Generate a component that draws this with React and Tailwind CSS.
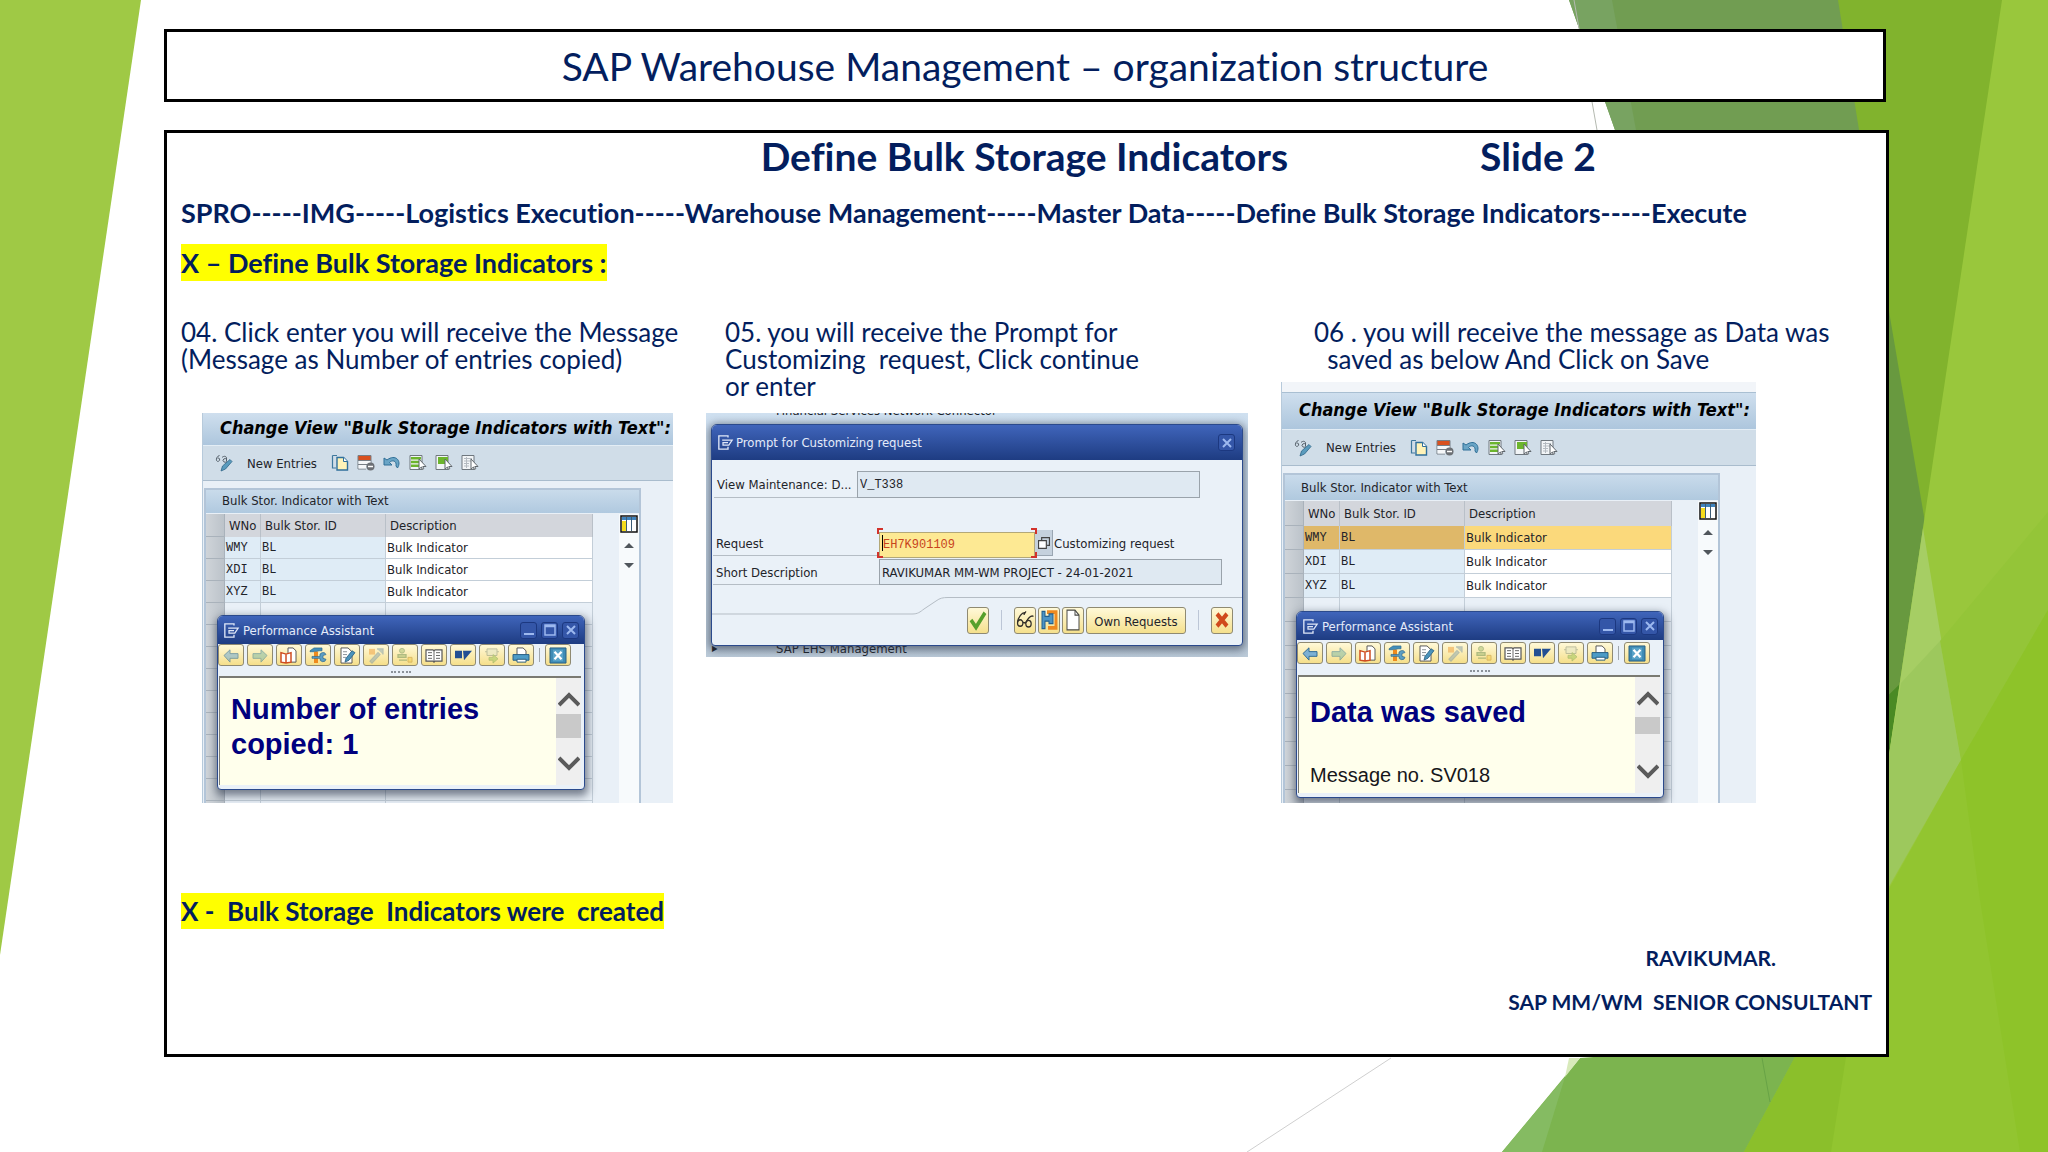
import React from "react";

const ROWS = [
    { wno: "WMY", id: "BL", text: "Bulk Indicator" },
    { wno: "XDI", id: "BL", text: "Bulk Indicator" },
    { wno: "XYZ", id: "BL", text: "Bulk Indicator" },
];

const BLANK_ROWS = [0, 1, 2, 3, 4, 5, 6, 7, 8, 9];

// Green facets behind the slide
function Backdrop() {
    return (
        <svg className="absolute inset-0 h-full w-full" viewBox="0 0 2048 1152" preserveAspectRatio="none" aria-hidden="true">
            <polygon points="0,0 141,0 0,955" fill="#9fc945" />
            <polygon points="1569,0 2048,0 2048,700 1870,900 1870,380 1700,380 1615,130" fill="#719d52" />
            <polygon points="1569,0 1612,0 1636,130 1615,130" fill="#78a361" />
            <polygon points="1838,0 2048,0 2048,700 1961,760" fill="#81b32d" />
            <polygon points="1870,200 1870,720 1905,680 1926,528" fill="#68993f" />
            <polygon points="1870,713 1904,680 1889,770 1870,900" fill="#4a8a24" />
            <polygon points="2002,0 2048,0 2048,1152 1832,1152 1889,755" fill="#99c73c" />
            <polygon points="1923,528 1961,760 1870,900 1870,860 1889,755" fill="#a6ce64" />
            <polygon points="1901,683 1940,641 1961,760 1870,920 1870,860 1889,755" fill="#9dc85d" />
            <polygon points="1940,641 2048,512 2048,700 1961,760" fill="#94c538" />
            <polygon points="1580,1058 1502,1152 1760,1152 1820,1040" fill="#7cb44f" />
            <polygon points="1569,1058 1580,1058 1565,1077" fill="#d8eabb" />
            <polygon points="1565,1077 1502,1152 1542,1152" fill="#85bb62" />
            <polygon points="1744,1152 1795,1057 1961,760 2048,610 2048,1152" fill="#92c530" />
            <polygon points="1744,1152 1795,1057 1846,1057 1831,1152" fill="#8bbf2b" />
            <polygon points="1961,760 2048,610 2048,1152 2020,1152 1980,900" fill="#8ec329" />
            <line x1="1574" y1="0" x2="1597" y2="130" stroke="#b4b9b0" strokeWidth="1" />
            <line x1="1762" y1="1058" x2="1770" y2="1102" stroke="#68a346" strokeWidth="1" />
            <line x1="1247" y1="1152" x2="1391" y2="1058" stroke="#cfcfcf" strokeWidth="1" />
        </svg>
    );
}

function Icon({ children, className = "size-[18px]" }) {
    return (
        <svg className={className} viewBox="0 0 18 18" fill="none" aria-hidden="true">
            {children}
        </svg>
    );
}

function SapWindowIcon() {
    return (
        <Icon className="h-[15px] w-[17px] shrink-0">
            <path d="M12 3V1H1v16h11v-3" stroke="#dfe7f8" strokeWidth="1.6" />
            <path d="M5 6h12l-4 6H6V9h6" stroke="#dfe7f8" strokeWidth="1.5" />
        </Icon>
    );
}

function DisplayChangeIcon() {
    return (
        <Icon>
            <path d="M4.500 1.500C2 2 1 5 1.500 6.500a1.700 1.700 0 1 0 1-2.500M7 3.500c2-2 5-1.500 4.500 1.500v2.500M11.500 5.500a1.800 1.800 0 1 0 0 1.800" stroke="#55606a" strokeWidth="1" />
            <path d="M7.500 12 15 5.500l2 2-6.500 7.500-4.500 2z" fill="#5a9bbd" stroke="#2f6688" strokeWidth=".8" />
        </Icon>
    );
}

function CopyIcon() {
    return (
        <Icon>
            <path d="M1.500 1.500H6M1.500 1.500V14H5" stroke="#3f789d" strokeWidth="1.200" />
            <path d="M6 3.500h6.500l4 4V16H6z" fill="#fff3b8" stroke="#2f6f9b" strokeWidth="1.400" />
            <path d="M12.500 3.500v4h4" fill="#fff" stroke="#2f6f9b" />
        </Icon>
    );
}

function DeleteRowIcon() {
    return (
        <Icon>
            <path d="M1 2h13v4H1z" fill="#d9501e" />
            <path d="M1 1.500h13V9M1 1.500V15h8M1 6.500h13M1 10.500h9" stroke="#777e85" />
            <path d="M1.500 7h12v3h-12zM1.500 11H9v3.500H1.500z" fill="#f5f7f9" />
            <circle cx="13.500" cy="12.500" r="4" fill="#6c7075" />
            <path d="M11 12.500h5" stroke="#fff" strokeWidth="1.500" />
        </Icon>
    );
}

function UndoIcon() {
    return (
        <Icon>
            <path d="M1 4v7h8L6.500 8.500C9 5.500 14 6.500 13 12l1.500 2C19 7 12.500-.5 4 6z" fill="#6aa5c6" stroke="#2f6f97" strokeWidth="1" />
        </Icon>
    );
}

function SelectIcon({ mode }) {
    return (
        <Icon>
            <path d="M1 1.500h12v14H1z" fill="#f2f5f7" stroke="#6f777e" />
            {mode === "all" && <path d="M2 3h10v2.500H2zM2 6.700h10v2.500H2zM2 10.400h10v2.500H2z" fill="#6cb52d" />}
            {mode === "block" && <path d="M3 3h10v7H3z" fill="#6cb52d" />}
            {mode === "none" && <path d="M3 4.500h8M3 7h8M3 9.500h5M3 12h5M5.500 3v11" stroke="#b5bbc1" />}
            <path d="M10 5v10l2.500-2 1 2.500 1.300-.8-1-2.200H17z" fill="#fff" stroke="#60676d" strokeWidth="1" />
        </Icon>
    );
}

function ConfigIcon() {
    return (
        <Icon>
            <path d="M1 1h16v16H1z" fill="#fff" stroke="#101010" strokeWidth="1.500" />
            <path d="M2 2h14v3H2z" fill="#3f83bd" />
            <path d="M2 6h4v10H2z" fill="#f6dc1c" />
            <path d="M6.500 2v14M11.500 2v14" stroke="#3b5c77" />
        </Icon>
    );
}

const ASSISTANT_ICONS = {
    back: <path d="M2 9l6-6v4h8v5H8v4z" fill="#7cb0d3" stroke="#2d6a95" />,
    forward: <path d="M16 9l-6-6v4H2v5h8v4z" fill="#8fc0a6" stroke="#4d8796" />,
    doc: (
        <>
            <path d="M8 1h5l3 3v12H8z" fill="#fff" stroke="#555" />
            <path d="M1 6l5 1.500L11 6v10l-5 1-5-1zM6 7.500V17" fill="#fff" stroke="#cf4d22" strokeWidth="1.500" />
        </>
    ),
    tools: (
        <>
            <path d="M1 4l4-3h8v3h-3l-3 1H1z" fill="#438fb9" stroke="#2b678d" strokeWidth=".7" />
            <path d="M5 5h4v12H5z" fill="#ef8b1d" />
            <path d="M3 10h8a3 3 0 0 1 6-2l-3 1v3l3 1a3 3 0 0 1-6-1H3z" fill="#5d9fc4" stroke="#2b678d" strokeWidth=".7" />
        </>
    ),
    edit: (
        <>
            <path d="M3 1h7l4 4v12H3z" fill="#fff" stroke="#555" />
            <path d="M5 5h4M5 8h4M5 11h3" stroke="#8b9298" />
            <path d="M8 12 14 4l3 2-6 8-4 2z" fill="#4b93bb" stroke="#255d80" strokeWidth=".8" />
        </>
    ),
    wand: (
        <>
            <path d="M2 2h6v6H2z" fill="#f0a94e" />
            <path d="M3 15 11 6l2 2-8 9zM10 2h6v6" fill="#9db2b1" stroke="#8aa0a6" strokeWidth="1.200" />
        </>
    ),
    person: (
        <>
            <circle cx="6" cy="4" r="2.500" fill="#b5c780" stroke="#7f9b61" />
            <path d="M2 8h8v3H2zM3 14h8" fill="#b5c780" stroke="#7f9b61" strokeWidth="1.300" />
            <path d="M12 11h4v5h-4z" fill="#f4d15a" stroke="#c79b3c" />
        </>
    ),
    book: (
        <>
            <path d="M1 3h7l1 1 1-1h7v12h-7l-1 1-1-1H1z" fill="#fff" stroke="#555" strokeWidth="1.200" />
            <path d="M9 4v12M3 6h4M3 9h4M3 12h4M11 6h4M11 9h4M11 12h4" stroke="#666" />
        </>
    ),
    flag: <path d="M1 4h7v8H1zM9 4h9L10 14z" fill="#234f93" />,
    send: (
        <>
            <path d="M4 2h10v7H4zM2 5h2M14 5h2" fill="#e4e6c4" stroke="#959d85" />
            <path d="M6 11h4V8l5 4.500-5 4.500v-3H6z" fill="#a9cb62" stroke="#84a554" strokeWidth=".8" />
        </>
    ),
    print: (
        <>
            <path d="M5 8V1h6l3 3v4" fill="#fff" stroke="#555" />
            <path d="M1 8h16v6H1z" fill="#4d9bc6" stroke="#285f83" />
            <path d="M5 13h9v3H5z" fill="#fff" stroke="#285f83" />
        </>
    ),
    close: (
        <>
            <path d="M1 1h16v16H1z" fill="#3f8cb6" stroke="#285f83" />
            <path d="M4 3h10v12H4z" fill="#5aa3c8" />
            <path d="M5.500 5l7 8M12.500 5l-7 8" stroke="#fff" strokeWidth="2.200" />
        </>
    ),
};

const ASSISTANT_TOOLS = ["back", "forward", "doc", "tools", "edit", "wand", "person", "book", "flag", "send", "print"];

function AssistantButton({ name, dim }) {
    return (
        <button
            type="button"
            aria-label={name}
            className="flex h-[22px] w-[26px] shrink-0 items-center justify-center rounded-[3px] border border-[#8f8a72] bg-linear-to-b from-[#fff9d8] to-[#f5df8a]"
        >
            <svg className={dim ? "h-[17px] w-[18px] opacity-60" : "h-[17px] w-[18px]"} viewBox="0 0 18 18" fill="none" preserveAspectRatio="none" aria-hidden="true">
                {ASSISTANT_ICONS[name]}
            </svg>
        </button>
    );
}

function CaptionButton({ label, children }) {
    return (
        <button type="button" aria-label={label} className="flex size-[17px] items-center justify-center rounded-[3px] border border-[#1c3880] bg-[#3456a8]">
            <svg className="size-3" viewBox="0 0 12 12" fill="none" stroke="#9db9ef" aria-hidden="true">
                {children}
            </svg>
        </button>
    );
}

function PerformanceAssistant({ late, children }) {
    const dimmed = late ? ["forward", "wand", "person", "send"] : ["back", "forward", "wand", "person", "send"];

    return (
        <section
            className={`absolute left-[14px] flex w-[368px] flex-col overflow-hidden rounded-t-md rounded-b-sm border border-[#2b4a8c] bg-[#eaf1f8] shadow-[1px_4px_8px_2px_rgba(40,50,70,0.6)] ${
                late ? "top-[229px] h-[187px]" : "top-[202px] h-[175px]"
            }`}
        >
            <header className="flex h-[28px] shrink-0 items-center gap-[3px] bg-linear-to-b from-[#4065bb] to-[#1e3c82] px-[5px] text-white">
                <SapWindowIcon />
                <h3 className="flex-1 text-[13px] text-[#e4ebfa]">Performance Assistant</h3>
                <div className="flex gap-1">
                    <CaptionButton label="Minimize">
                        <path d="M1 10h10" strokeWidth="2" />
                    </CaptionButton>
                    <CaptionButton label="Maximize">
                        <path d="M1 1h10v10H1zM1 2.500h10" strokeWidth="1.500" />
                    </CaptionButton>
                    <CaptionButton label="Close">
                        <path d="M2 2l8 8M10 2l-8 8" strokeWidth="2" />
                    </CaptionButton>
                </div>
            </header>
            <div className={`flex shrink-0 flex-col justify-between ${late ? "h-[35px]" : "h-8"}`}>
                <div className={late ? "flex gap-[3px] pt-[2px]" : "flex gap-[3px]"}>
                    {ASSISTANT_TOOLS.map((name) => (
                        <AssistantButton key={name} name={name} dim={dimmed.includes(name)} />
                    ))}
                    <span className="mx-[2px] my-1 w-px bg-[#a0a6ac]" />
                    <AssistantButton name="close" />
                </div>
                <span className="mb-[3px] w-5 self-center border-t-2 border-dotted border-[#8b929a]" />
            </div>
            <div className="mr-[3px] mb-1 ml-px flex min-h-0 flex-1 border-t-2 border-l border-[#7a7a72] bg-[#ffffec]">
                <div className="flex-1 pl-[11px] font-['Liberation_Sans',sans-serif]">{children}</div>
                <div className="flex w-[25px] flex-col items-center justify-between bg-[#efefef] py-3">
                    <svg className="h-[18px] w-[22px]" viewBox="0 0 22 18" fill="none" stroke="#5b5b5b" strokeWidth="4" aria-hidden="true">
                        <path d="M1 15 11 5l10 10" />
                    </svg>
                    <span className={late ? "mb-5 h-[17px] w-full bg-[#c9c9c9]" : "mb-3 h-6 w-full bg-[#c9c9c9]"} />
                    <svg className="h-[18px] w-[22px]" viewBox="0 0 22 18" fill="none" stroke="#5b5b5b" strokeWidth="4" aria-hidden="true">
                        <path d="M1 3l10 10L21 3" />
                    </svg>
                </div>
            </div>
        </section>
    );
}

function BulkTable({ late }) {
    const rowHeight = late ? "h-6" : "h-[22px]";
    const selector = "border-r border-b border-[#a9b2bb] bg-linear-to-r from-[#cfd4d9] to-[#bcc3ca]";

    return (
        <table className="w-[387px] shrink-0 table-fixed border-separate border-spacing-0 text-left text-[13px] leading-none">
            <colgroup>
                <col className="w-[19px]" />
                <col className="w-[36px]" />
                <col className="w-[125px]" />
                <col className="w-[207px]" />
            </colgroup>
            <thead>
                <tr className={late ? "h-[25px] bg-[#d3d6dc]" : "h-[23px] bg-[#d3d6dc]"}>
                    <th className={selector} />
                    <th className="border-r border-[#b9c0c8] pl-1 font-normal">WNo</th>
                    <th className="border-r border-[#b9c0c8] pl-1 font-normal">Bulk Stor. ID</th>
                    <th className="border-r border-[#b9c0c8] pl-1 font-normal">Description</th>
                </tr>
            </thead>
            <tbody>
                {ROWS.map((row, i) => {
                    const active = late && i === 0;
                    const keyCell = active ? "bg-[#dfb869]" : "bg-[#dfecf6]";
                    return (
                        <tr key={row.wno} className={rowHeight}>
                            <td className={selector} />
                            <td className={`border-r border-b border-[#c3ced8] pl-px font-['Liberation_Mono',monospace] text-xs ${keyCell}`}>{row.wno}</td>
                            <td className={`border-r border-b border-[#c3ced8] pl-px font-['Liberation_Mono',monospace] text-xs ${keyCell}`}>{row.id}</td>
                            <td className={`border-r border-b border-[#c3ced8] pl-px ${active ? "bg-[#fbd97b]" : "bg-white"}`}>{row.text}</td>
                        </tr>
                    );
                })}
                {BLANK_ROWS.map((n) => (
                    <tr key={n} className={rowHeight}>
                        <td className={selector} />
                        <td className="border-r border-b border-[#c3ced8]" />
                        <td className="border-r border-b border-[#c3ced8]" />
                        <td className="border-r border-b border-[#c3ced8]" />
                    </tr>
                ))}
            </tbody>
        </table>
    );
}

function ChangeView({ late, children }) {
    return (
        <div
            className={`relative flex flex-col overflow-hidden border-l border-[#b7cadb] bg-[#e9f0f7] font-['DejaVu_Sans_Condensed','DejaVu_Sans',sans-serif] text-[#1e2329] ${
                late ? "h-[421px] w-[475px]" : "h-[390px] w-[471px]"
            }`}
        >
            {late && <div className="h-[11px] shrink-0 border-b border-[#a9bfd2] bg-[#f2f5f9]" />}
            <h3
                className={`shrink-0 bg-linear-to-b from-[#cfdfee] to-[#adc6dd] pl-[17px] text-[18px] font-bold whitespace-nowrap text-black italic ${
                    late ? "h-9 leading-[34px]" : "h-8 leading-[30px]"
                }`}
            >
                Change View "Bulk Storage Indicators with Text":
            </h3>
            <div className={`flex shrink-0 items-center gap-2 border-y border-t-[#e3edf5] border-b-[#a9bccd] bg-[#d0dde8] pl-3 ${late ? "h-[37px]" : "h-9"}`}>
                <DisplayChangeIcon />
                <button type="button" className="mr-[6px] ml-[6px] text-[13px] whitespace-nowrap">
                    New Entries
                </button>
                <CopyIcon />
                <DeleteRowIcon />
                <UndoIcon />
                <SelectIcon mode="all" />
                <SelectIcon mode="block" />
                <SelectIcon mode="none" />
            </div>
            <div className="mt-[7px] ml-px flex w-[437px] flex-1 flex-col border-2 border-b-0 border-[#b3c5d8]">
                <h4 className={`mb-px shrink-0 bg-linear-to-b from-[#c9dbeb] to-[#b0c9df] pl-4 text-[13px] ${late ? "h-[25px] leading-[25px]" : "h-[23px] leading-[22px]"}`}>
                    Bulk Stor. Indicator with Text
                </h4>
                <div className="flex min-h-0 flex-1 justify-between">
                    <BulkTable late={late} />
                    <div className="flex w-5 flex-col items-center bg-[#f7fafc] pt-px">
                        <ConfigIcon />
                        <svg className="mt-2 h-[30px] w-[10px]" viewBox="0 0 10 30" fill="#50565c" aria-hidden="true">
                            <path d="M0 7l5-5 5 5zM0 22l5 5 5-5z" />
                        </svg>
                    </div>
                </div>
            </div>
            <PerformanceAssistant late={late}>{children}</PerformanceAssistant>
        </div>
    );
}

function PromptButton({ label, children }) {
    return (
        <button
            type="button"
            aria-label={label}
            className="flex h-[27px] w-[22px] items-center justify-center rounded-[3px] border border-[#8f8a72] bg-linear-to-b from-[#fff9d8] to-[#f5e08c]"
        >
            <svg className="h-[22px] w-[18px]" viewBox="0 0 18 18" fill="none" preserveAspectRatio="none" aria-hidden="true">
                {children}
            </svg>
        </button>
    );
}

function RequestPrompt() {
    return (
        <div className="relative flex h-[244px] w-[542px] flex-col justify-between overflow-hidden bg-linear-to-b from-[#cfe0f0] to-[#bccbd9] font-['DejaVu_Sans_Condensed','DejaVu_Sans',sans-serif] text-[13px] text-[#1e2329]">
            <p className="-mt-[10px] pl-[70px] leading-4">Financial Services Network Connector</p>
            <p className="flex pl-[6px] leading-4">
                <span className="w-16 text-[8px]">▶</span>
                SAP EHS Management
            </p>
            <form
                className="absolute top-[11px] left-[5px] flex h-[222px] w-[532px] flex-col overflow-hidden rounded-t-md rounded-b-sm border border-[#2b4a8c] bg-[#eaf1f8] shadow-[0_2px_8px_2px_rgba(40,50,70,0.6)]"
                onSubmit={(e) => e.preventDefault()}
            >
                <header className="flex h-[35px] shrink-0 items-center gap-[2px] bg-linear-to-b from-[#4065bb] to-[#1e3c82] pr-[7px] pl-[5px]">
                    <SapWindowIcon />
                    <h3 className="flex-1 text-[#e4ebfa]">Prompt for Customizing request</h3>
                    <CaptionButton label="Close">
                        <path d="M2 2l8 8M10 2l-8 8" strokeWidth="2" />
                    </CaptionButton>
                </header>
                <div className="mt-[11px] flex h-[27px] pl-[2px]">
                    <label htmlFor="view" className="w-[143px] border-b border-[#b5bdc5] pl-[3px] leading-[27px] whitespace-nowrap">
                        View Maintenance: D...
                    </label>
                    <input id="view" readOnly defaultValue="V_T338" className="w-[343px] border border-[#9aa3ab] bg-[#dfe9f2] pl-[2px] font-['Liberation_Mono',monospace] text-xs" />
                </div>
                <div className="mt-8 flex h-[26px] pl-px">
                    <label htmlFor="request" className="w-[166px] border-b border-[#b5bdc5] pl-[3px] leading-[27px]">
                        Request
                    </label>
                    <div className="relative w-[156px]">
                        <input
                            id="request"
                            defaultValue="EH7K901109"
                            className="h-full w-full border border-[#b3a878] bg-[#fde993] pl-[3px] font-['Liberation_Mono',monospace] text-xs text-[#c8441c]"
                        />
                        <span className="absolute top-[5px] left-[3px] h-4 w-px bg-black" />
                        <span className="absolute -top-[2px] -left-[2px] size-[6px] border-t-2 border-l-2 border-[#d2322b]" />
                        <span className="absolute -top-[2px] -right-[2px] size-[6px] border-t-2 border-r-2 border-[#d2322b]" />
                        <span className="absolute -bottom-[2px] -left-[2px] size-[6px] border-b-2 border-l-2 border-[#d2322b]" />
                        <span className="absolute -right-[2px] -bottom-[2px] size-[6px] border-r-2 border-b-2 border-[#d2322b]" />
                    </div>
                    <button type="button" aria-label="Value help" className="flex w-[18px] items-center justify-center border-r border-b border-[#9aa6b2] bg-[#c5d1dd]">
                        <Icon className="h-[18px] w-[14px]">
                            <path d="M6 5V2h10v10h-3" stroke="#444" strokeWidth="1.500" />
                            <path d="M2 6h10v10H2z" fill="#fff" stroke="#444" strokeWidth="1.500" />
                        </Icon>
                    </button>
                    <span className="pl-px leading-[27px] whitespace-nowrap">Customizing request</span>
                </div>
                <div className="mt-[3px] flex h-[26px] pl-px">
                    <label htmlFor="short" className="w-[166px] border-b border-[#b5bdc5] pl-[3px] leading-[27px]">
                        Short Description
                    </label>
                    <input id="short" readOnly defaultValue="RAVIKUMAR MM-WM PROJECT - 24-01-2021" className="w-[343px] border border-[#9aa3ab] bg-[#dfe9f2] pl-[2px]" />
                </div>
                <div className="relative flex flex-1 items-center justify-end gap-[2px] pt-[10px] pr-[9px]">
                    <svg className="absolute top-3 left-0 h-[18px] w-full" viewBox="0 0 530 18" fill="none" stroke="#b5bdc5" aria-hidden="true">
                        <path d="M0 17h200c6 0 8-2 12-5l12-8c4-3 7-3.500 12-3.500h294" />
                    </svg>
                    <PromptButton label="Continue">
                        <path d="M2 9l5 6L16 3" stroke="#56a02c" strokeWidth="3.500" />
                    </PromptButton>
                    <span className="mx-[10px] h-5 w-px bg-[#bcc6d6]" />
                    <PromptButton label="Display">
                        <path d="M9 3C6 2.500 2 7 1.500 11M10 2c-1 1.500-2 2-2 3M17.500 6c-3-1-6 2-7.500 5M7 11l3 .5" stroke="#33302a" strokeWidth="1.200" />
                        <circle cx="4.200" cy="11.500" r="2.700" stroke="#33302a" strokeWidth="1.200" />
                        <circle cx="12.500" cy="12" r="2.700" stroke="#33302a" strokeWidth="1.200" />
                    </PromptButton>
                    <PromptButton label="Where used">
                        <path d="M7 2.500h9v13H8" stroke="#ee8a21" strokeWidth="3" />
                        <path d="M2 2h3v4h4v-2h4v8H9v-2H5v6H2z" fill="#4c93c4" stroke="#235f8c" />
                    </PromptButton>
                    <PromptButton label="Create">
                        <path d="M3 1h8l4 4v12H3z" fill="#fff" stroke="#4a4a46" />
                        <path d="M11 1v4h4" stroke="#4a4a46" />
                    </PromptButton>
                    <button type="button" className="h-[27px] w-[100px] rounded-[3px] border border-[#8f8a72] bg-linear-to-b from-[#fff9d8] to-[#f5e08c]">
                        Own Requests
                    </button>
                    <span className="mx-[10px] h-5 w-px bg-[#bcc6d6]" />
                    <PromptButton label="Cancel">
                        <path d="M4 4l10 10M14 4 4 14" stroke="#d04a1c" strokeWidth="4" />
                    </PromptButton>
                </div>
            </form>
        </div>
    );
}

export default function App() {
    return (
        <div className="relative min-h-screen overflow-hidden bg-white font-['Lato',sans-serif] text-[#031e5e] [font-variant-ligatures:none]">
            <Backdrop />
            <main className="relative flex min-h-screen flex-col pt-[29px] pr-[159px] pb-[95px] pl-[164px]">
                <h1 className="mr-[3px] flex h-[73px] items-center justify-center border-[3px] border-black bg-white pt-px text-[39px] leading-none">
                    SAP Warehouse Management – organization structure
                </h1>

                <article className="mt-7 flex flex-1 flex-col border-[3px] border-black bg-white pl-[14px]">
                    <div className="flex gap-48 pl-[34%] text-[39px] leading-[46px] font-bold">
                        <h2>Define Bulk Storage Indicators</h2>
                        <p>Slide 2</p>
                    </div>
                    <p className="mt-4 text-[27px] leading-9 font-bold whitespace-nowrap">
                        SPRO-----IMG-----Logistics Execution-----Warehouse Management-----Master Data-----Define Bulk Storage Indicators-----Execute
                    </p>
                    <h2 className="mt-[13px] self-start bg-[#ffff00] text-[27px] leading-[37px] font-bold">X – Define Bulk Storage Indicators :</h2>

                    <div className="mt-[38px] grid grid-cols-[525fr_575fr_605fr] items-start text-[26px] leading-[27px]">
                        <section>
                            <p className="h-[94px] whitespace-nowrap">
                                04. Click enter you will receive the Message
                                <br />
                                (Message as Number of entries copied)
                            </p>
                            <div className="ml-[21px]">
                                <ChangeView>
                                    <p className="pt-[14px] text-[29px] leading-[35px] font-bold text-[#00007e]">
                                        Number of entries
                                        <br />
                                        copied: 1
                                    </p>
                                </ChangeView>
                            </div>
                        </section>

                        <section>
                            <p className="h-[94px] pl-[19px] whitespace-pre">
                                05. you will receive the Prompt for
                                <br />
                                {"Customizing  request, Click continue"}
                                <br />
                                or enter
                            </p>
                            <RequestPrompt />
                        </section>

                        <section>
                            <p className="h-[63px] pl-[33px] whitespace-pre">
                                06 . you will receive the message as Data was
                                <br />
                                {"  saved as below And Click on Save"}
                            </p>
                            <ChangeView late>
                                <p className="pt-4 text-[29px] leading-[38px] font-bold text-[#00007e]">Data was saved</p>
                                <p className="mt-[30px] text-[20px] leading-7 text-[#16161a]">Message no. SV018</p>
                            </ChangeView>
                        </section>
                    </div>

                    <h2 className="mt-[90px] self-start bg-[#ffff00] text-[26px] leading-[36px] font-bold whitespace-pre">{"X -  Bulk Storage  Indicators were  created"}</h2>
                    <footer className="mt-[7px] flex flex-col items-end pr-[14px] text-[21px] leading-[44px] font-bold">
                        <p className="pr-24">RAVIKUMAR.</p>
                        <p className="whitespace-pre">{"SAP MM/WM  SENIOR CONSULTANT"}</p>
                    </footer>
                </article>
            </main>
        </div>
    );
}
